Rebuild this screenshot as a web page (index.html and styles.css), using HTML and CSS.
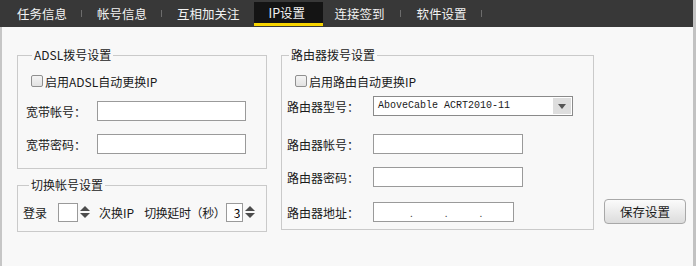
FILE: index.html
```html
<!DOCTYPE html>
<html lang="zh-CN">
<head>
  <meta charset="UTF-8">
  <title>IP设置</title>
  <link rel="stylesheet" href="styles.css">
</head>
<body>
  <div class="window">
    <!-- 顶部标签栏 -->
    <div class="tabbar">
      <div class="tab">任务信息</div>
      <span class="sep"></span>
      <div class="tab">帐号信息</div>
      <span class="sep"></span>
      <div class="tab">互相加关注</div>
      <div class="tab active">IP设置</div>
      <div class="tab after-active">连接签到</div>
      <span class="sep"></span>
      <div class="tab">软件设置</div>
      <span class="sep"></span>
    </div>

    <div class="main">
      <div class="col-left">
        <!-- ADSL 拨号 -->
        <fieldset class="group group-adsl">
          <legend>ADSL拨号设置</legend>
          <label class="check-row"><span class="checkbox"></span>启用ADSL自动更换IP</label>
          <div class="field-row first">
            <span class="label label-adsl">宽带帐号：</span>
            <input class="text-input w148" type="text">
          </div>
          <div class="field-row">
            <span class="label label-adsl">宽带密码：</span>
            <input class="text-input w148" type="password">
          </div>
        </fieldset>

        <!-- 切换帐号 -->
        <fieldset class="group group-switch">
          <legend>切换帐号设置</legend>
          <div class="switch-row">
            <span class="label">登录</span>
            <span class="spin spin-count"><input class="spin-input" type="text" value=""><span class="spin-arrows"><i class="up"></i><i class="down"></i></span></span>
            <span class="label">次换IP</span>
            <span class="label label-delay">切换延时（秒）</span>
            <span class="spin spin-delay"><input class="spin-input" type="text" value="3"><span class="spin-arrows"><i class="up"></i><i class="down"></i></span></span>
          </div>
        </fieldset>
      </div>

      <!-- 路由器拨号 -->
      <fieldset class="group group-router">
        <legend>路由器拨号设置</legend>
        <label class="check-row"><span class="checkbox"></span>启用路由自动更换IP</label>
        <div class="field-row router-first">
          <span class="label label-router">路由器型号：</span>
          <div class="select">
            <span class="select-text">AboveCable ACRT2010-11</span>
            <span class="select-arrow"><i></i></span>
          </div>
        </div>
        <div class="field-row router-row">
          <span class="label label-router">路由器帐号：</span>
          <input class="text-input w149" type="text">
        </div>
        <div class="field-row router-row2">
          <span class="label label-router">路由器密码：</span>
          <input class="text-input w149" type="password">
        </div>
        <div class="field-row router-row3">
          <span class="label label-router">路由器地址：</span>
          <div class="ip-box">
            <span class="ip-seg"></span>.<span class="ip-seg"></span>.<span class="ip-seg"></span>.<span class="ip-seg last"></span>
          </div>
        </div>
      </fieldset>

      <div class="col-action">
        <button class="btn-save">保存设置</button>
      </div>
    </div>
  </div>
</body>
</html>
```

FILE: styles.css
```css
* { box-sizing: border-box; margin: 0; padding: 0; }

body {
  width: 696px;
  height: 266px;
  overflow: hidden;
  background: #f8f8f8;
  font-family: "Noto Sans CJK SC", "Liberation Sans", sans-serif;
  font-size: 12px;
  color: #1a1a1a;
}

.window {
  height: 266px;
  border-right: 3px solid #c2c2c2;
}

/* 标签栏 */
.tabbar {
  display: flex;
  align-items: stretch;
  height: 27px;
  background: #383838;
  padding-left: 2px;
}

.tab {
  color: #f2f2f2;
  font-size: 12.5px;
  line-height: 27px;
  padding: 0 14px 0 15px;
}

.tab.active {
  width: 69px;
  background: #141414;
  margin: 2px 0 1px;
  line-height: 22px;
  padding: 0 0 0 15px;
  border-bottom: 3px solid #f7d400;
}

.tab.after-active { padding: 0 15px 0 12px; }
.tab.after-active + .sep + .tab { padding-left: 16px; }

.sep {
  width: 1px;
  height: 7px;
  align-self: center;
  background: #6c6c6c;
}

/* 主体 */
.main {
  display: flex;
  align-items: flex-start;
  height: 239px;
  border-left: 2px solid #c6c6c6;
  padding: 21px 0 0 15px;
}

.col-left {
  width: 250px;
  display: flex;
  flex-direction: column;
}

.group {
  border: 1px solid #cacaca;
  margin: 0;
  min-width: 0;
}

.group legend {
  line-height: 14px;
  padding: 0 2px;
  color: #1a1a1a;
}

.group-adsl {
  height: 121px;
  padding: 0 0 0 8px;
}

.group-adsl legend { margin-left: 6px; }

.group-switch {
  margin-top: 9px;
  height: 54px;
  padding: 0 0 0 5px;
}

.group-switch legend { margin-left: 6px; }

.group-router {
  width: 313px;
  height: 182px;
  margin-left: 14px;
  padding: 0 0 0 5px;
}

.group-router legend { margin-left: 2px; }

/* 复选框 */
.check-row {
  display: flex;
  align-items: center;
  height: 20px;
  margin-top: 9px;
  margin-left: 5px;
}

.group-router .check-row { margin-left: 8px; }

.checkbox {
  width: 12px;
  height: 12px;
  margin-right: 2px;
  border: 1px solid #8f8f8f;
  border-radius: 2px;
  background: linear-gradient(#f4f4f4, #e2e2e2);
}

/* 输入行 */
.field-row {
  display: flex;
  align-items: center;
  height: 20px;
  margin-top: 13px;
}

.field-row.first { margin-top: 10px; }

.label-adsl { width: 71px; }
.label-router { width: 86px; }

.text-input {
  height: 20px;
  border: 1px solid #9a9a9a;
  background: #fff;
  outline: none;
  font: inherit;
}

.w148 { width: 149px; }
.w149 { width: 150px; }

.router-first { margin-top: 5px; }
.router-row { margin-top: 18px; }
.router-row2 { margin-top: 13px; }
.router-row3 { margin-top: 15px; }

/* 下拉框 */
.select {
  display: flex;
  width: 200px;
  height: 20px;
  border: 1px solid #8a8a8a;
  background: #fff;
}

.select-text {
  flex: 1;
  padding-left: 4px;
  font-family: "Liberation Mono", monospace;
  font-size: 10px;
  line-height: 18px;
}

.select-arrow {
  width: 18px;
  margin: 1px;
  background: #dedede;
  display: flex;
  align-items: center;
  justify-content: center;
}

.select-arrow i {
  width: 0;
  height: 0;
  border-left: 4px solid transparent;
  border-right: 4px solid transparent;
  border-top: 5px solid #555;
}

/* IP 地址 */
.ip-box {
  display: flex;
  align-items: center;
  width: 141px;
  height: 20px;
  border: 1px solid #9a9a9a;
  background: #fff;
  padding-left: 36px;
  font-size: 10px;
  color: #444;
}

.ip-seg { width: 32px; }
.ip-seg:first-child { width: 0; }
.ip-seg.last { width: 20px; }

/* 切换帐号 */
.switch-row {
  display: flex;
  align-items: center;
  height: 20px;
  margin-top: 10px;
}

.spin {
  display: flex;
  align-items: center;
}

.spin-input {
  width: 20px;
  height: 19px;
  border: 1px solid #9a9a9a;
  background: #fff;
  outline: none;
  font: inherit;
  text-align: right;
  padding-right: 2px;
}

.spin-count { margin-left: 11px; margin-right: 8px; }
.spin-delay { margin-left: 1px; }
.spin-delay .spin-input { width: 17px; }
.label-delay { margin-left: 10px; letter-spacing: -0.4px; }

.spin-arrows {
  display: flex;
  flex-direction: column;
  align-items: center;
  gap: 2px;
  width: 12px;
  margin-left: 1px;
}

.spin-arrows i {
  width: 0;
  height: 0;
  border-left: 5px solid transparent;
  border-right: 5px solid transparent;
}

.spin-arrows .up { border-bottom: 5px solid #4c4c4c; }
.spin-arrows .down { border-top: 5px solid #4c4c4c; }

/* 保存按钮 */
.col-action {
  margin: 151px 0 0 10px;
}

.btn-save {
  width: 82px;
  height: 25px;
  border: 1px solid #a8a8a8;
  border-radius: 4px;
  background: linear-gradient(#fbfbfb, #dcdcdc);
  font: inherit;
  font-size: 12.5px;
  color: #1a1a1a;
}
```
